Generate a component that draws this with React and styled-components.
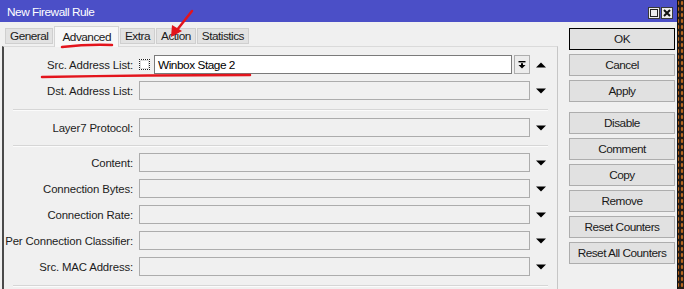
import React from 'react';
import styled, { createGlobalStyle } from 'styled-components';

const GlobalStyle = createGlobalStyle`
  html, body {
    margin: 0;
    padding: 0;
    overflow: hidden;
  }
  body {
    background: #231c16 radial-gradient(#b8651f 1px, transparent 1.6px) 0 0 / 4px 6px;
    font-family: "Liberation Sans", Arial, sans-serif;
    color: #000;
  }
`;

const Window = styled.div`
  position: relative;
  width: 677px;
  height: 289px;
  background: #f0f0f0;
  border-right: 1px solid #111;
  display: flex;
  flex-direction: column;
  overflow: hidden;
`;

const TitleBar = styled.div`
  height: 22px;
  flex: none;
  background: #4b4fc7;
  display: flex;
  align-items: center;
  justify-content: space-between;
  padding: 1px 4px 0 7px;
  box-sizing: border-box;
  color: #fff;
  font-size: 11.8px;
  letter-spacing: -0.45px;
`;

const WinButtons = styled.div`
  display: flex;
  gap: 1px;
  margin-top: 2px;
`;

const WinButton = styled.div`
  width: 12px;
  height: 12px;
  background: #ececec;
  border: 1px solid #3a3a3a;
  box-sizing: border-box;
  display: flex;
  align-items: center;
  justify-content: center;
`;

const Body = styled.div`
  flex: 1;
  display: flex;
`;

const LeftSide = styled.div`
  width: 558px;
  display: flex;
  flex-direction: column;
`;

const TabRow = styled.div`
  height: 24px;
  display: flex;
  align-items: flex-end;
  gap: 1px;
  padding-left: 5px;
`;

const Tab = styled.div`
  height: ${p => (p.$active ? '21px' : '16px')};
  margin-bottom: ${p => (p.$active ? '-1px' : '2px')};
  padding: 0 ${p => (p.$active ? '7px' : '4px')};
  background: ${p => (p.$active ? '#f7f7f7' : '#e2e2e2')};
  border: 1px solid ${p => (p.$active ? '#d4d4d4' : '#cfcfcf')};
  border-bottom: ${p => (p.$active ? 'none' : '1px solid #cfcfcf')};
  box-sizing: border-box;
  display: flex;
  align-items: center;
  font-size: 11.8px;
  letter-spacing: -0.5px;
  color: #1a1a1a;
  position: relative;
  z-index: ${p => (p.$active ? 1 : 0)};
`;

const Panel = styled.div`
  flex: 1;
  margin-left: 2px;
  border-left: 2px solid #4a4a4a;
  border-top: 1px solid #dadada;
  border-right: 1px solid #c6c6c6;
  background: #f0f0f0;
`;

const Section = styled.div`
  display: flex;
  flex-direction: column;
  gap: 7px;
  margin: 0 9px;
  padding: ${p => p.$pad || '8px 0 9px'};
  border-bottom: 1px solid #d6d6d6;
  box-shadow: 0 1px 0 #fbfbfb;
`;

const Row = styled.div`
  display: grid;
  grid-template-columns: 126px 1fr 18px;
  height: 19px;
  align-items: center;
`;

const Label = styled.div`
  display: flex;
  justify-content: flex-end;
  padding-right: 6px;
  white-space: nowrap;
  font-size: 11.4px;
  letter-spacing: -0.15px;
  color: #1c1c1c;
`;

const FieldWrap = styled.div`
  display: flex;
  align-items: center;
  height: 19px;
`;

const Check = styled.div`
  width: 11px;
  height: 11px;
  flex: none;
  box-sizing: border-box;
  border: 1px dotted #222;
  background: #fff;
  box-shadow: inset 0 0 0 1px #dcdcdc;
  margin-right: 4px;
`;

const Input = styled.div`
  flex: 1;
  height: 19px;
  box-sizing: border-box;
  border: 1px solid ${p => (p.$filled ? '#7a7a7a' : '#acacac')};
  background: ${p => (p.$filled ? '#fff' : '#f0f0f0')};
  display: flex;
  align-items: center;
  padding-left: 3px;
  font-size: 11.8px;
  letter-spacing: -0.45px;
`;

const DropButton = styled.div`
  width: 16px;
  height: 19px;
  margin-left: 2px;
  box-sizing: border-box;
  border: 1px solid #adadad;
  background: #ececec;
  display: flex;
  align-items: center;
  justify-content: center;
`;

const Arrow = styled.div`
  display: flex;
  justify-content: flex-end;
  padding-right: 2px;
`;

const ButtonColumn = styled.div`
  width: 106px;
  margin-left: 11px;
  padding-top: 6px;
  display: flex;
  flex-direction: column;
  gap: 4px;
`;

const Button = styled.div`
  height: 22px;
  box-sizing: border-box;
  border: 1px solid ${p => (p.$default ? '#000' : '#adadad')};
  background: #e1e1e1;
  display: flex;
  align-items: center;
  justify-content: center;
  font-size: 11.8px;
  letter-spacing: -0.5px;
  color: #1a1a1a;
  margin-top: ${p => (p.$spaced ? '6px' : '0')};
`;

const Annotations = styled.svg`
  position: absolute;
  top: 0;
  left: 0;
  pointer-events: none;
  z-index: 5;
`;

const TriDown = () => (
  <svg width="10" height="6" viewBox="0 0 10 6">
    <path d="M0 0.5h10L5 5.5z" fill="#000" />
  </svg>
);

const TriUp = () => (
  <svg width="10" height="6" viewBox="0 0 10 6">
    <path d="M0 5.5h10L5 0.5z" fill="#000" />
  </svg>
);

const tabs = ['General', 'Advanced', 'Extra', 'Action', 'Statistics'];

const sections = [
  { pad: '8px 0 9px', rows: ['Src. Address List:', 'Dst. Address List:'] },
  { pad: '8px 0 8px', rows: ['Layer7 Protocol:'] },
  {
    pad: '7px 0 9px',
    rows: ['Content:', 'Connection Bytes:', 'Connection Rate:', 'Per Connection Classifier:', 'Src. MAC Address:'],
  },
];

const buttons = [
  { text: 'OK', default: true },
  { text: 'Cancel' },
  { text: 'Apply' },
  { text: 'Disable', spaced: true },
  { text: 'Comment' },
  { text: 'Copy' },
  { text: 'Remove' },
  { text: 'Reset Counters' },
  { text: 'Reset All Counters' },
];

const App = () => {
  return (
    <>
      <GlobalStyle />
      <Window>
        <TitleBar>
          <span>New Firewall Rule</span>
          <WinButtons>
            <WinButton>
              <svg width="8" height="8" viewBox="0 0 8 8">
                <rect x="0.5" y="0.5" width="7" height="7" fill="none" stroke="#222" />
              </svg>
            </WinButton>
            <WinButton>
              <svg width="8" height="8" viewBox="0 0 8 8">
                <path d="M1 1L7 7M7 1L1 7" stroke="#111" strokeWidth="2" />
              </svg>
            </WinButton>
          </WinButtons>
        </TitleBar>
        <Body>
          <LeftSide>
            <TabRow>
              {tabs.map(t => (
                <Tab key={t} $active={t === 'Advanced'}>{t}</Tab>
              ))}
            </TabRow>
            <Panel>
              {sections.map((s, si) => (
                <Section key={si} $pad={s.pad}>
                  {s.rows.map(label => {
                    const isSrc = label === 'Src. Address List:';
                    return (
                      <Row key={label}>
                        <Label>{label}</Label>
                        <FieldWrap>
                          {isSrc && <Check />}
                          <Input $filled={isSrc}>{isSrc ? 'Winbox Stage 2' : ''}</Input>
                          {isSrc && (
                            <DropButton>
                              <svg width="8" height="8" viewBox="0 0 8 8">
                                <rect x="0.5" y="0" width="7" height="1.4" fill="#000" />
                                <rect x="3" y="2.2" width="2" height="2" fill="#000" />
                                <path d="M0.5 4h7L4 7.6z" fill="#000" />
                              </svg>
                            </DropButton>
                          )}
                        </FieldWrap>
                        <Arrow>{isSrc ? <TriUp /> : <TriDown />}</Arrow>
                      </Row>
                    );
                  })}
                </Section>
              ))}
            </Panel>
          </LeftSide>
          <ButtonColumn>
            {buttons.map(b => (
              <Button key={b.text} $default={b.default} $spaced={b.spaced}>{b.text}</Button>
            ))}
          </ButtonColumn>
        </Body>
        <Annotations width="684" height="289" viewBox="0 0 684 289">
          <path d="M62 47 Q 88 44 112 45" stroke="#e3141c" strokeWidth="2.5" fill="none" strokeLinecap="round" />
          <path d="M42 77 Q 150 75 250 75" stroke="#e3141c" strokeWidth="2.5" fill="none" strokeLinecap="round" />
          <path d="M192 11 L177 30" stroke="#e3141c" strokeWidth="2.5" fill="none" strokeLinecap="round" />
          <path d="M171 37 L172 25 L182 31 Z" fill="#e3141c" />
        </Annotations>
      </Window>
    </>
  );
};

export default App;
